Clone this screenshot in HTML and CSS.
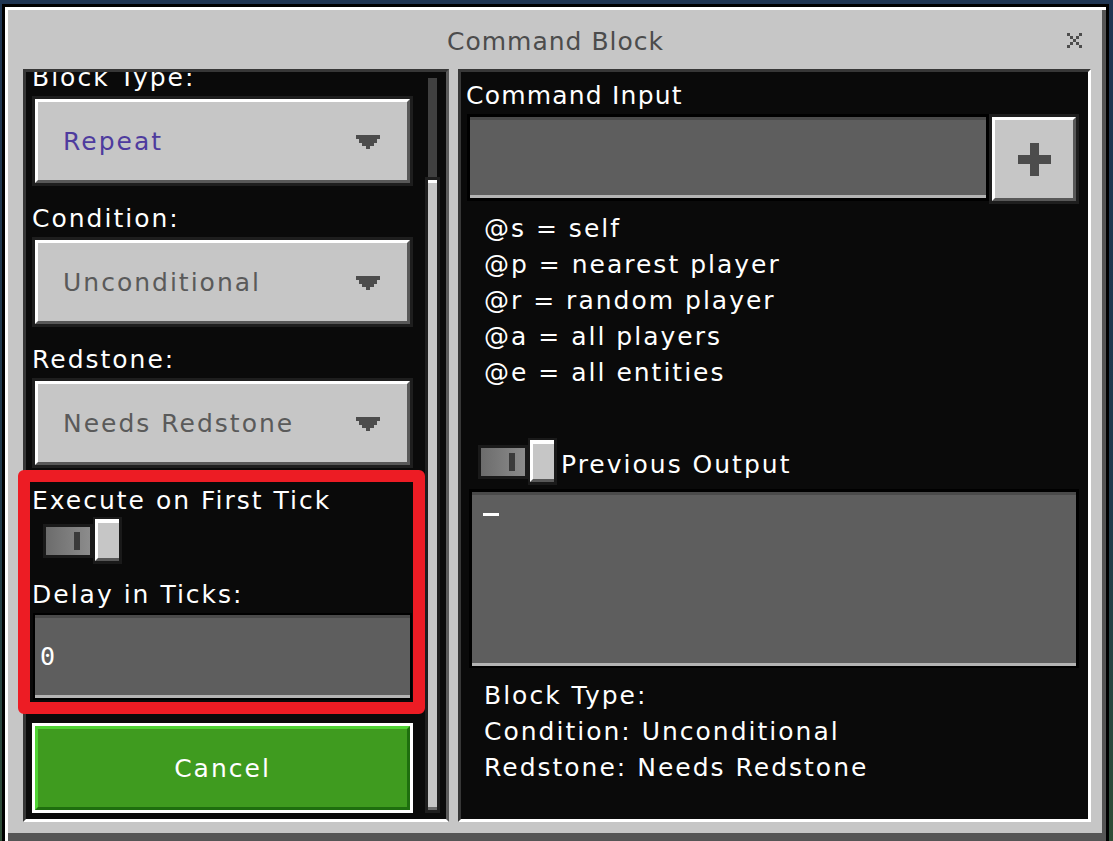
FILE: index.html
```html
<!DOCTYPE html>
<html lang="en">
<head>
  <meta charset="UTF-8">
  <meta name="viewport" content="width=device-width, initial-scale=1.0">
  <title>Command Block</title>
  <link rel="stylesheet" href="styles.css">
</head>
<body>
  <div class="dialog">

    <div class="titlebar">
      <span></span>
      <h1 class="title">Command Block</h1>
      <button class="close" aria-label="Close">
        <svg width="15" height="15" viewBox="0 0 15 15">
          <path fill="#4c4c4c" d="M0 0h3v3H0zM12 0h3v3h-3zM3 3h3v3H3zM9 3h3v3H9zM6 6h3v3H6zM3 9h3v3H3zM9 9h3v3H9zM0 12h3v3H0zM12 12h3v3h-3z"/>
        </svg>
      </button>
    </div>

    <div class="body">
      <section class="panel panel-left">
        <div class="scroll">
          <div class="scroll-inner">
            <div class="label">Block Type:</div>
            <div class="dropdown">
              <div class="face dropdown-face">
                <span class="value selected">Repeat</span>
                <svg class="arrow" width="24" height="14" viewBox="0 0 24 14"><polygon fill="#4c4c4c" points="0,0 24,0 24,4 21,4 21,8 18,8 18,11 14,11 14,14 10,14 10,11 6,11 6,8 3,8 3,4 0,4"/></svg>
              </div>
            </div>

            <div class="label">Condition:</div>
            <div class="dropdown">
              <div class="face dropdown-face">
                <span class="value">Unconditional</span>
                <svg class="arrow" width="24" height="14" viewBox="0 0 24 14"><polygon fill="#4c4c4c" points="0,0 24,0 24,4 21,4 21,8 18,8 18,11 14,11 14,14 10,14 10,11 6,11 6,8 3,8 3,4 0,4"/></svg>
              </div>
            </div>

            <div class="label">Redstone:</div>
            <div class="dropdown">
              <div class="face dropdown-face">
                <span class="value">Needs Redstone</span>
                <svg class="arrow" width="24" height="14" viewBox="0 0 24 14"><polygon fill="#4c4c4c" points="0,0 24,0 24,4 21,4 21,8 18,8 18,11 14,11 14,14 10,14 10,11 6,11 6,8 3,8 3,4 0,4"/></svg>
              </div>
            </div>

            <div class="label">Execute on First Tick</div>
            <div class="toggle">
              <div class="toggle-track"><div class="toggle-fill"><span class="toggle-notch"></span></div></div>
              <div class="toggle-knob"><div class="toggle-knob-face"></div></div>
            </div>

            <div class="label label-delay">Delay in Ticks:</div>
            <div class="field field-delay">
              <div class="field-inner">0</div>
            </div>

            <button class="btn-green"><span class="btn-green-face">Cancel</span></button>
          </div>
        </div>

        <div class="scrollbar">
          <div class="track"></div>
          <div class="thumb"><div class="thumb-face"></div></div>
        </div>

        <!-- annotation drawn over the screenshot -->
        <div class="highlight"></div>
      </section>

      <section class="panel panel-right">
        <div class="label label-command">Command Input</div>
        <div class="command-row">
          <div class="field field-command"><div class="field-inner"></div></div>
          <button class="plus" aria-label="Add">
            <span class="face plus-face">
              <svg width="33" height="33" viewBox="0 0 33 33"><path fill="#4c4c4c" d="M12 0h9v12h12v9H21v12h-9V21H0v-9h12z"/></svg>
            </span>
          </button>
        </div>

        <div class="help">
          <div>@s = self</div>
          <div>@p = nearest player</div>
          <div>@r = random player</div>
          <div>@a = all players</div>
          <div>@e = all entities</div>
        </div>

        <div class="output-row">
          <div class="toggle">
            <div class="toggle-track"><div class="toggle-fill"><span class="toggle-notch"></span></div></div>
            <div class="toggle-knob"><div class="toggle-knob-face"></div></div>
          </div>
          <div class="label output-label">Previous Output</div>
        </div>

        <div class="field field-output">
          <div class="field-inner"><span class="cursor"></span></div>
        </div>

        <div class="info">
          <div>Block Type:</div>
          <div>Condition: Unconditional</div>
          <div>Redstone: Needs Redstone</div>
        </div>
      </section>
    </div>

  </div>
</body>
</html>
```

FILE: styles.css
```css
html, body {
  margin: 0;
  padding: 0;
  height: 100%;
}
*, *:before, *:after { box-sizing: border-box; }
body {
  overflow: hidden;
  background: linear-gradient(180deg, #1f3552 0%, #203a4c 60%, #2f4d36 100%);
  font-family: "DejaVu Sans", sans-serif;
  font-size: 25px;
  letter-spacing: 2px;
  color: #fff;
}
button {
  font: inherit;
  letter-spacing: inherit;
  color: inherit;
  border: 0;
  padding: 0;
  margin: 0;
  cursor: pointer;
  outline: none;
}

.dialog {
  display: flex;
  flex-direction: column;
  width: 1107px;
  height: 840px;
  margin: 4px 0 0 2px;
  padding: 0 15px 19px 18px;
  border: 3px solid #000;
  background: #c6c6c6;
  box-shadow: inset 3px 3px 0 #fff, inset -4px -8px 0 #555;
}

.titlebar {
  display: grid;
  grid-template-columns: 1fr auto 1fr;
  align-items: start;
  height: 62px;
  margin: 0 -15px 0 -18px;
}
.title {
  margin: 0;
  padding-top: 17px;
  font-size: 25px;
  font-weight: normal;
  line-height: 36px;
  letter-spacing: 1px;
  color: #4c4c4c;
}
.close {
  justify-self: end;
  width: 15px;
  height: 15px;
  margin: 26px 24px 0 0;
  background: none;
}
.close svg { display: block; }

.body {
  flex: 1;
  display: flex;
  gap: 9px;
  min-height: 0;
}
.panel {
  background: #0a0a0a;
  border: 3px solid;
  border-color: #373737 #fff #fff #373737;
}
.panel-left {
  position: relative;
  display: flex;
  width: 426px;
  border-right-color: #5b5b5b;
}
.panel-right {
  flex: 1;
  padding: 5px 9px 0 5px;
}

.label { line-height: 36px; }

/* left column */
.scroll {
  flex: 1;
  overflow: hidden;
  padding-left: 6px;
}
.scroll-inner { margin-top: -12px; }

.face {
  background: #c6c6c6;
  border: 3px solid;
  border-color: #fff #585858 #585858 #fff;
}

.dropdown {
  height: 90px;
  padding: 3px;
  margin-bottom: 15px;
  background: #1e1e1e;
}
.dropdown-face {
  display: flex;
  align-items: center;
  justify-content: space-between;
  height: 100%;
  padding: 0 27px 0 25px;
}
.value { color: #5a5a5a; }
.value.selected { color: #4e3b9e; }
.arrow { display: block; margin-top: 2px; }

.toggle {
  display: flex;
  align-items: center;
  width: 79px;
  height: 47px;
  margin: -2px 0 0 11px;
}
.toggle-track {
  width: 50px;
  height: 34px;
  padding: 3px;
  background: #1a1a1a;
}
.toggle-fill {
  display: flex;
  align-items: center;
  justify-content: flex-end;
  height: 100%;
  padding-right: 10px;
  background: linear-gradient(90deg, #6c6c6c, #8c8c8c);
}
.toggle-notch {
  width: 6px;
  height: 18px;
  background: #3a3a3a;
}
.toggle-knob {
  width: 29px;
  height: 47px;
  padding: 2px 3px 3px 2px;
  background: #1a1a1a;
}
.toggle-knob-face {
  height: 100%;
  background: #c6c6c6;
  border-top: 4px solid #fff;
  border-left: 3px solid #fff;
  border-bottom: 3px solid #585858;
}

.label-delay { margin-top: 13px; }

.field {
  padding: 2px;
  background: #000;
}
.field-inner {
  display: flex;
  align-items: center;
  height: 100%;
  background: #5e5e5e;
  border-top: 3px solid #4a4a4a;
  border-bottom: 3px solid #b4b4b4;
}
.field-delay {
  height: 87px;
  margin: 0 1px;
}
.field-delay .field-inner {
  padding-left: 5px;
  font-family: "DejaVu Sans Mono", monospace;
}

.btn-green {
  display: flex;
  width: 100%;
  height: 90px;
  margin-top: 23px;
  padding: 3px;
  background: #fff;
}
.btn-green-face {
  flex: 1;
  display: flex;
  align-items: center;
  justify-content: center;
  background: #3f9b1f;
  border: 3px solid;
  border-color: #4fd334 #1e6e0e #1e6e0e #4fd334;
}

.scrollbar {
  display: flex;
  flex-direction: column;
  width: 15px;
  margin: 0 6px 0 12px;
  padding: 6px 0;
}
.track {
  height: 99px;
  margin: 0 3px;
  background: #404040;
}
.thumb {
  flex: 1;
  display: flex;
  padding: 3px;
  background: #1e1e1e;
}
.thumb-face {
  flex: 1;
  background: #c6c6c6;
  border-top: 3px solid #fff;
  border-bottom: 3px solid #6b6b6b;
}

.highlight {
  position: absolute;
  left: -8px;
  top: 398px;
  width: 407px;
  height: 244px;
  border: 12px solid #ed1c24;
  border-radius: 6px;
  pointer-events: none;
}

/* right column */
.label-command {
  line-height: 37px;
  letter-spacing: 1.2px;
}
.command-row {
  display: flex;
  margin-left: 1px;
}
.field-command {
  flex: 1;
  height: 87px;
  padding: 3px;
}
.plus {
  display: flex;
  width: 90px;
  height: 90px;
  padding: 3px;
  background: #1e1e1e;
}
.plus-face {
  flex: 1;
  display: flex;
  align-items: center;
  justify-content: center;
}
.plus-face svg { display: block; }

.help {
  margin: 7px 0 0 18px;
  line-height: 36px;
}

.output-row {
  display: flex;
  align-items: center;
  margin-top: 47px;
}
.output-row .toggle { margin: 0 0 0 12px; }
.output-label {
  margin: 6px 0 0 4px;
}

.field-output {
  height: 179px;
  margin: 4px 0 0 3px;
  padding: 3px 3px 2px;
}
.field-output .field-inner {
  align-items: flex-start;
  padding: 18px 0 0 11px;
}
.cursor {
  width: 16px;
  height: 3px;
  background: #fff;
}

.info {
  margin: 10px 0 0 18px;
  line-height: 36px;
}
```
